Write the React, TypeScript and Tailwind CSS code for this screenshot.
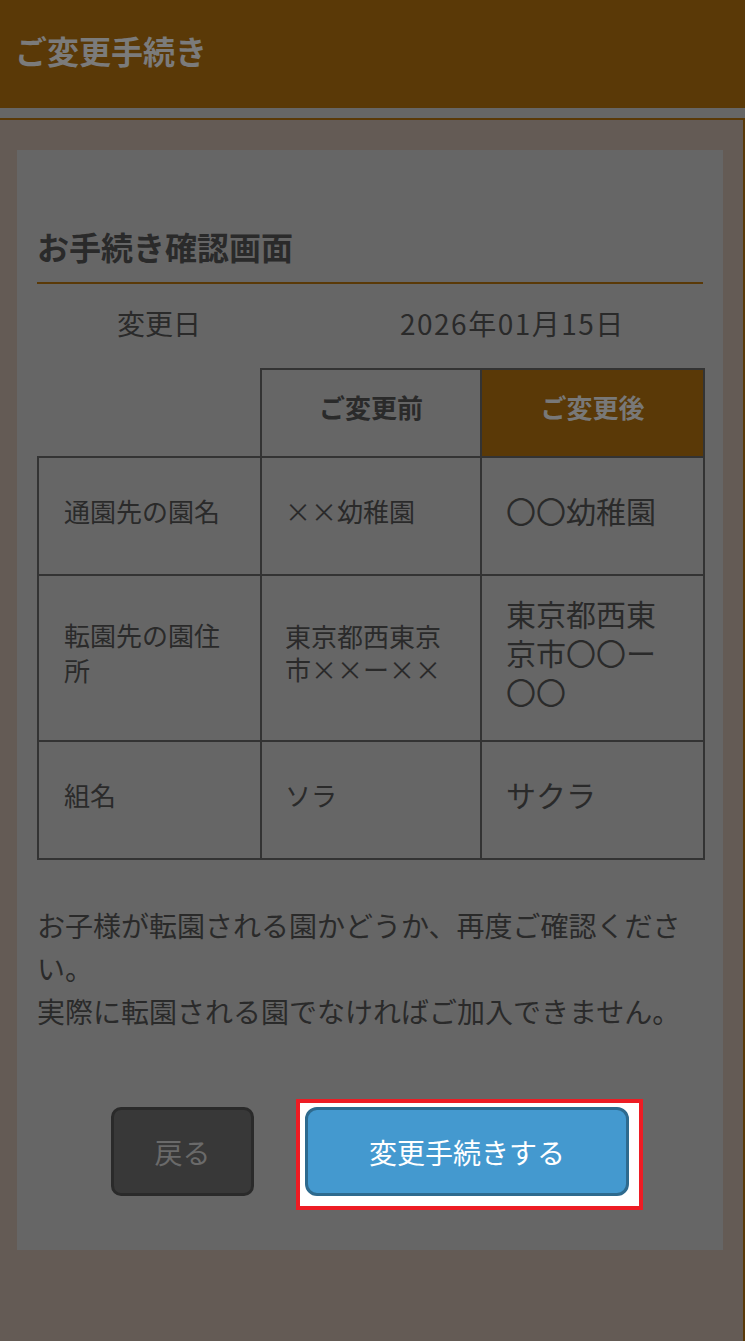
import React from "react";

const ROWS = [
  { label: "通園先の園名", before: "××幼稚園", after: "〇〇幼稚園", h: "h-[118px]" },
  { label: "転園先の園住所", before: "東京都西東京市××ー××", after: "東京都西東京市〇〇ー〇〇", h: "h-[166px]" },
  { label: "組名", before: "ソラ", after: "サクラ", h: "h-[118px]" },
];

const App: React.FC = () => {
  return (
    <div className="min-h-screen bg-[#666666] font-['Noto_Sans_CJK_JP',sans-serif] text-[#2a2a2a]">
      {/* Header */}
      <div className="h-[108px] bg-[#5a3907] flex items-center px-[15px] pb-[8px]">
        <h1 className="text-[32px] font-bold text-[#7b7b7b] leading-none">ご変更手続き</h1>
      </div>
      <div className="h-[10px]" />

      {/* Outer container */}
      <div className="min-h-[1223px] bg-[#645b55] border-t-2 border-r-2 border-[#5a3907] pt-[30px] pl-[17px] pr-[20px] pb-[90px]">
        <div className="bg-[#666666] px-[20px] pt-[72px] pb-[54px]">
          <h2 className="text-[32px] font-bold leading-[48px] text-[#2a2a2a]">お手続き確認画面</h2>
          <div className="h-[2px] bg-[#5a3907] mt-[12px]" />

          {/* Date */}
          <div className="flex items-center h-[66px] text-[28px] mt-[6px]">
            <div className="w-[244px] text-center">変更日</div>
            <div className="ml-[119px] tracking-[1.5px]">2026年01月15日</div>
          </div>

          {/* Table */}
          <table className="mt-[12px] border-collapse w-[666px] table-fixed">
            <thead>
              <tr className="h-[88px]">
                <th className="w-[223px] border-0" />
                <th className="w-[220px] border-2 border-[#333333] pb-[14px] text-[26px] font-bold text-[#2a2a2a]">ご変更前</th>
                <th className="w-[223px] border-2 border-[#333333] pb-[14px] bg-[#5a3907] text-[26px] font-bold text-[#787878]">ご変更後</th>
              </tr>
            </thead>
            <tbody>
              {ROWS.map((r) => (
                <tr key={r.label} className={r.h}>
                  <td className="border-2 border-[#333333] pl-[25px] pr-[20px] pb-[12px] text-[26px] leading-[35px] align-middle">{r.label}</td>
                  <td className="border-2 border-[#333333] pl-[23px] pr-[20px] pb-[12px] text-[26px] leading-[33px] align-middle">{r.before}</td>
                  <td className="border-2 border-[#333333] pl-[24px] pr-[20px] pb-[12px] text-[30px] leading-[39px] align-middle">{r.after}</td>
                </tr>
              ))}
            </tbody>
          </table>

          {/* Notice */}
          <p className="mt-[44px] text-[28px] leading-[43px]">
            お子様が転園される園かどうか、再度ご確認ください。
            <br />
            実際に転園される園でなければご加入できません。
          </p>

          {/* Buttons */}
          <div className="flex justify-center items-center gap-[51px] mt-[74px]">
            <button className="w-[143px] h-[89px] rounded-[10px] border-[3px] border-[#2a2a2a] bg-[#383838] text-[28px] text-[#6a6a6a]">
              戻る
            </button>
            <div className="relative">
              <div className="absolute -left-[9px] -right-[14px] -top-[8px] -bottom-[14px] border-4 border-[#ed1c24] bg-white" />
              <button className="relative w-[324px] h-[89px] rounded-[12px] border-[3px] border-[#2e6a8e] bg-[#4499cf] text-[28px] text-white">
                変更手続きする
              </button>
            </div>
          </div>
        </div>
      </div>
    </div>
  );
};

export default App;
